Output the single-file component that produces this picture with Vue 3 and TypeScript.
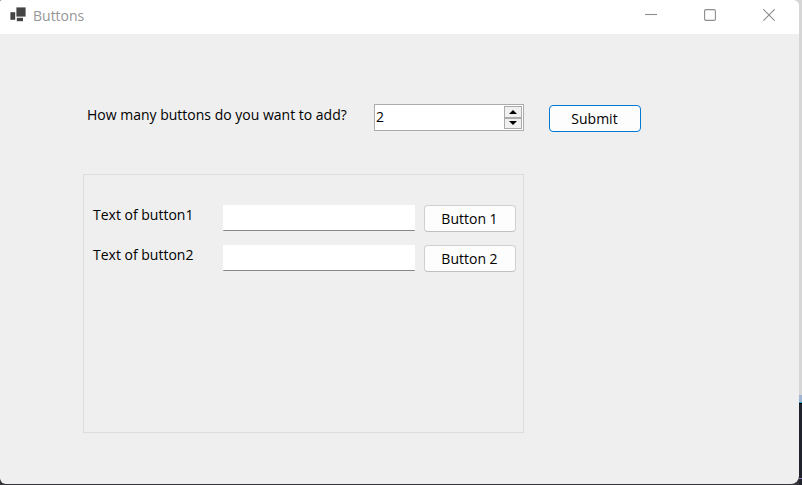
<script setup lang="ts">
import { ref } from 'vue'

interface ButtonRow {
  id: number
  text: string
}

const count = ref<number>(2)

const makeRows = (total: number): ButtonRow[] =>
  Array.from({ length: total }, (_, i) => ({ id: i + 1, text: '' }))

const rows = ref<ButtonRow[]>(makeRows(count.value))

const step = (delta: number): void => {
  count.value = Math.max(0, count.value + delta)
}

const submit = (): void => {
  rows.value = makeRows(count.value)
}
</script>

<template>
  <div class="desktop">
    <main class="window">
      <header class="titlebar">
        <svg class="app-icon" width="16" height="20" viewBox="0 0 16 20" aria-hidden="true">
          <rect x="6.4" y="0.4" width="9.2" height="9.2" fill="#444" />
          <rect x="0.4" y="5.2" width="4.8" height="7.6" fill="#444" />
          <rect x="6.8" y="10.8" width="6.2" height="3.4" fill="#444" />
        </svg>
        <h1 class="title">Buttons</h1>
        <div class="captions">
          <button type="button" class="caption" aria-label="Minimize">
            <svg width="12" height="12" viewBox="0 0 12 12"><path d="M0 5.5H12" /></svg>
          </button>
          <button type="button" class="caption" aria-label="Maximize">
            <svg width="12" height="12" viewBox="0 0 12 12"><rect x="0.6" y="0.6" width="10.8" height="10.8" rx="1.4" /></svg>
          </button>
          <button type="button" class="caption" aria-label="Close">
            <svg width="12" height="12" viewBox="0 0 12 12"><path d="M0.3 0.3L11.7 11.7M11.7 0.3L0.3 11.7" /></svg>
          </button>
        </div>
      </header>

      <form class="client" @submit.prevent="submit">
        <div class="question">
          <label class="question-label" for="count">How many buttons do you want to add?</label>
          <div class="spinner">
            <input id="count" v-model.number="count" class="spinner-input" type="text" inputmode="numeric" />
            <div class="spinner-steps">
              <button type="button" class="step" aria-label="Increase" @click="step(1)">
                <svg width="8" height="4" viewBox="0 0 8 4"><path d="M0 4L4 0L8 4Z" /></svg>
              </button>
              <button type="button" class="step" aria-label="Decrease" @click="step(-1)">
                <svg width="8" height="4" viewBox="0 0 8 4"><path d="M0 0L4 4L8 0Z" /></svg>
              </button>
            </div>
          </div>
        </div>
        <button type="submit" class="button button-default">Submit</button>

        <section class="panel">
          <div v-for="row in rows" :key="row.id" class="row">
            <label class="row-label" :for="`text-${row.id}`">Text of button{{ row.id }}</label>
            <input :id="`text-${row.id}`" v-model="row.text" class="textbox" type="text" />
            <button type="button" class="button">{{ row.text || `Button ${row.id}` }}</button>
          </div>
        </section>
      </form>
    </main>
  </div>
</template>

<style>
body {
  margin: 0;
}
</style>

<style scoped>
.desktop {
  box-sizing: border-box;
  display: flex;
  min-height: 100vh;
  padding: 0 3px 1px 0;
  background:
    linear-gradient(#d6d6d6 0 395px, #a0b4d2 395px 402px, #2aa5b4 402px 403px, #000 403px 404px, #20222c 404px 478px, #8f7bb5 478px 479px, #20222c 479px) right / 3px 100% no-repeat,
    linear-gradient(#d6d6d6, #d6d6d6) right top / 12px 12px no-repeat,
    #35343a;
  font-family: "Segoe UI", "Open Sans", "Noto Sans", sans-serif;
  font-size: 14px;
  line-height: 20px;
  color: #000;
}

.window {
  flex: 1;
  display: flex;
  flex-direction: column;
  min-width: 0;
  overflow: hidden;
  background: #efefef;
  border-radius: 2px 6px 8px 6px;
}

.titlebar {
  display: flex;
  align-items: center;
  height: 34px;
  padding-left: 10px;
  background: #fff;
}

.app-icon {
  flex: none;
}

.title {
  flex: 1;
  margin: 0;
  padding: 0 0 2px 7px;
  font-size: 14px;
  font-weight: 400;
  color: #969696;
}

.captions {
  display: flex;
  align-self: stretch;
  padding-right: 1px;
}

.caption {
  display: flex;
  align-items: center;
  justify-content: center;
  width: 59px;
  padding: 0 0 4px;
  border: 0;
  background: transparent;
}

.caption svg {
  fill: none;
  stroke: #8c8c8c;
  stroke-width: 1.1;
}

.client {
  flex: 1;
  display: grid;
  grid-template-columns: minmax(0, 1fr) 92px;
  grid-template-rows: 28px 1fr;
  gap: 42px 25px;
  padding: 70px 158px 51px 83px;
}

.question {
  display: flex;
  align-items: flex-start;
  justify-content: space-between;
  padding-left: 4px;
}

.question-label {
  line-height: 22px;
  white-space: nowrap;
}

.spinner {
  box-sizing: border-box;
  display: flex;
  width: 150px;
  height: 27px;
  padding: 1px;
  border: 1px solid #ababab;
  background: #fff;
}

.spinner-input {
  flex: 1;
  min-width: 0;
  padding: 0 0 2px;
  border: 0;
  outline: 0;
  background: transparent;
  font: inherit;
  color: inherit;
}

.spinner-steps {
  display: flex;
  flex-direction: column;
  width: 18px;
}

.step {
  flex: 1;
  display: flex;
  align-items: center;
  justify-content: center;
  padding: 0;
  border: 1px solid #ababab;
  background: #f0f0f0;
}

.step svg {
  fill: #000;
}

.button {
  box-sizing: border-box;
  width: 92px;
  height: 27px;
  padding: 0 1px 0 0;
  border: 1px solid #d0d0d0;
  border-bottom-color: #c0c0c0;
  border-radius: 4px;
  background: #fdfdfd;
  font: inherit;
  color: inherit;
}

.button-default {
  align-self: end;
  border-color: #0078d4;
}

.panel {
  display: flex;
  flex-direction: column;
  gap: 13px;
  padding: 30px 7px 30px 9px;
  border: 1px solid #dcdcdc;
}

.row {
  display: grid;
  grid-template-columns: 121px minmax(0, 1fr) 92px;
  column-gap: 9px;
  align-items: start;
}

.row-label {
  white-space: nowrap;
}

.textbox {
  box-sizing: border-box;
  width: 100%;
  height: 26px;
  padding: 0 4px;
  border: 0;
  border-bottom: 1px solid #868686;
  border-radius: 1px;
  outline: 0;
  background: #fff;
  font: inherit;
  color: inherit;
}
</style>
